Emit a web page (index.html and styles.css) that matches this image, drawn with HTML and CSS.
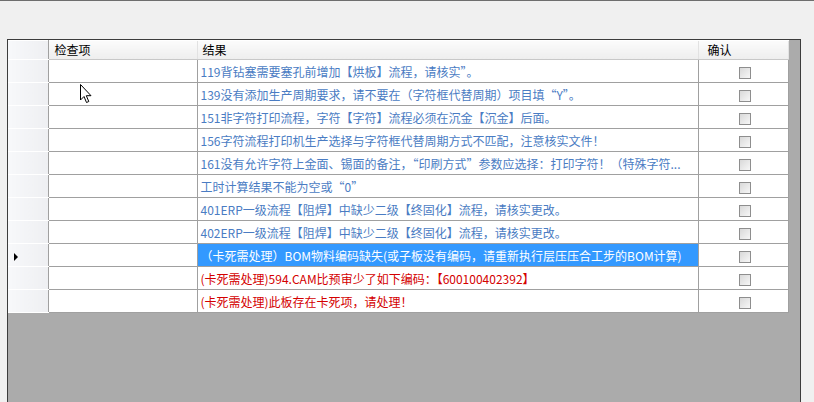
FILE: index.html
```
<!DOCTYPE html>
<html>
<head>
	<meta charset="utf-8">
	<title>检查结果</title>
	<link rel="stylesheet" href="styles.css">
</head>
<body>

<div class="topline"></div>

<section class="gridC">
	<table class="tablaC">
		<colgroup>
			<col class="c0"><col class="c1"><col class="c2"><col class="c3">
		</colgroup>
		<thead>
			<tr>
				<th class="rh"></th>
				<th>检查项</th>
				<th>结果</th>
				<th>确认</th>
			</tr>
		</thead>
		<tbody>
			<tr><td class="rh"></td><td></td><td class="txt">119背钻塞需要塞孔前增加【烘板】流程，请核实”。</td><td class="chk"><span class="box"></span></td></tr>
			<tr><td class="rh"></td><td></td><td class="txt">139没有添加生产周期要求，请不要在（字符框代替周期）项目填“Y”。</td><td class="chk"><span class="box"></span></td></tr>
			<tr><td class="rh"></td><td></td><td class="txt">151非字符打印流程，字符【字符】流程必须在沉金【沉金】后面。</td><td class="chk"><span class="box"></span></td></tr>
			<tr><td class="rh"></td><td></td><td class="txt">156字符流程打印机生产选择与字符框代替周期方式不匹配，注意核实文件！</td><td class="chk"><span class="box"></span></td></tr>
			<tr><td class="rh"></td><td></td><td class="txt">161没有允许字符上金面、锡面的备注，“印刷方式”参数应选择：打印字符！（特殊字符...</td><td class="chk"><span class="box"></span></td></tr>
			<tr><td class="rh"></td><td></td><td class="txt">工时计算结果不能为空或“0”</td><td class="chk"><span class="box"></span></td></tr>
			<tr><td class="rh"></td><td></td><td class="txt">401ERP一级流程【阻焊】中缺少二级【终固化】流程，请核实更改。</td><td class="chk"><span class="box"></span></td></tr>
			<tr><td class="rh"></td><td></td><td class="txt">402ERP一级流程【阻焊】中缺少二级【终固化】流程，请核实更改。</td><td class="chk"><span class="box"></span></td></tr>
			<tr><td class="rh cur"><span class="flecha"></span></td><td></td><td class="txt sel">（卡死需处理）BOM物料编码缺失(或子板没有编码，请重新执行层压压合工步的BOM计算)</td><td class="chk"><span class="box"></span></td></tr>
			<tr><td class="rh"></td><td></td><td class="txt rojo">(卡死需处理)594.CAM比预审少了如下编码：【600100402392】</td><td class="chk"><span class="box"></span></td></tr>
			<tr><td class="rh"></td><td></td><td class="txt rojo">(卡死需处理)此板存在卡死项，请处理！</td><td class="chk"><span class="box"></span></td></tr>
		</tbody>
	</table>
</section>

<svg class="mouseC" width="12" height="20" viewBox="0 0 12 20">
	<path d="M0.5 0.5 L0.5 16 L4 12.5 L6.5 18.5 L8.8 17.5 L6.3 11.7 L11 11.7 Z" fill="#fff" stroke="#000" stroke-width="1" stroke-linejoin="miter"/>
</svg>

</body>
</html>
```

FILE: styles.css
```
*,*:after,*:before{border: 0;margin: 0;padding: 0;box-sizing: border-box;}
html,body{height: 402px; overflow: hidden;}
body{
	background-color: #f0f0f0;
	font-size: 12px;
	font-family: "Noto Sans CJK SC", "DejaVu Sans", sans-serif;
	position: relative;
}

.topline{height: 1px; background: #6e6e6e;}

.gridC{
	margin: 38px 13px 0 7px;
	height: 363px;
	border: 1px solid #3c3c3c;
	border-bottom: 0;
	background-color: #ababab;
}

.tablaC{
	border-collapse: collapse;
	table-layout: fixed;
	width: 780px;
	background: #fff;
}
.c0{width: 40px;}
.c1{width: 149px;}
.c2{width: 501px;}
.c3{width: 90px;}

.tablaC th{
	height: 19px;
	font-weight: normal;
	text-align: left;
	color: #000;
	padding: 0 0 0 6px;
	background: linear-gradient(#fbfbfb, #eeeeee);
	border-right: 1px solid #e2e2e2;
	border-bottom: 1px solid #c8c8c8;
	line-height: 18px;
}
.tablaC th:nth-child(3){padding-left: 5px;}
.tablaC th:last-child{padding-left: 9px;}

.tablaC td{
	height: 23px;
	border: 1px solid #a0a0a0;
	padding: 0 0 0 3px;
	white-space: nowrap;
	overflow: hidden;
	vertical-align: middle;
}

.tablaC .rh{
	background: linear-gradient(to right, #f7f8fa, #eeeff2);
	border-top: 1px solid #ffffff;
	border-bottom: 1px solid #ffffff;
	border-left: 0;
	border-right: 1px solid #a0a0a0;
	padding: 0 0 0 6px;
}
.tablaC th.rh{border-right: 1px solid #a0a0a0;}

.txt{color: #4a7cc3;}
.rojo{color: #d40000;}
.sel{background-color: #3399ff; color: #fff;}

.chk{text-align: center;}
.box{
	display: inline-block;
	width: 12px;
	height: 12px;
	margin: 4px 0 0 1px;
	border: 1px solid #8e8e8e;
	background: linear-gradient(135deg, #d9d9d9, #f7f7f7);
	vertical-align: top;
}

.flecha{
	display: inline-block;
	width: 0;
	height: 0;
	margin-top: 2px;
	border-top: 4px solid transparent;
	border-bottom: 4px solid transparent;
	border-left: 4px solid #000;
}

.mouseC{position: absolute; left: 80px; top: 84px;}
```
